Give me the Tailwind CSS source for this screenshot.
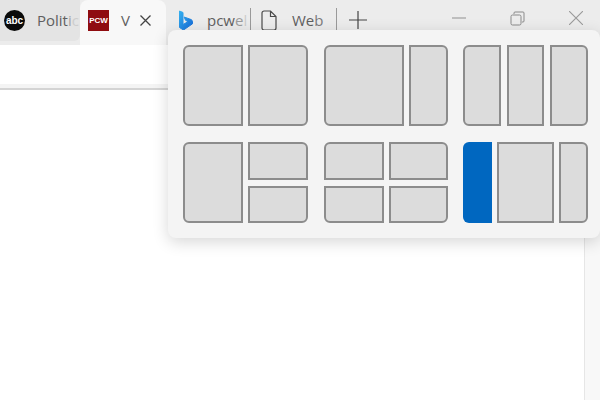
<!DOCTYPE html>
<html lang="en">
<head>
  <meta charset="UTF-8" />
  <title>Snap layouts</title>
  <script src="https://cdn.jsdelivr.net/npm/@tailwindcss/browser@4"></script>
</head>
<body class="w-[600px] h-[400px] overflow-hidden bg-white relative font-['Open_Sans',sans-serif]">

  <!-- title bar with tabs -->
  <div class="h-[45px] bg-[#ececec] flex items-start text-[15px] leading-none text-[#5f5f5f]">
    <div class="w-[80px] h-[41px] bg-[#e4e4e4] rounded-br-[6px] flex items-center pl-[4px] shrink-0">
      <div class="w-[21px] h-[21px] rounded-full bg-[#0b0b0b] flex items-center justify-center text-white text-[10px] font-bold font-['Liberation_Sans',sans-serif] shrink-0">abc</div>
      <span class="ml-[12px] whitespace-nowrap">Polit<span class="text-[#a4a4a4]">i</span><span class="text-[#cdcdcd]">c</span></span>
    </div>
    <div class="w-[86px] h-[45px] bg-[#f8f8f8] rounded-t-[8px] flex items-center pb-[4px] pl-[8px] shrink-0">
      <div class="w-[21px] h-[21px] bg-[#8f0c10] flex items-center justify-center text-white text-[8px] font-bold font-['Liberation_Sans',sans-serif] shrink-0">PCW</div>
      <span class="ml-[12px]">V</span>
      <svg class="ml-[10px]" width="11" height="11" viewBox="0 0 11 11" fill="none" stroke="#444" stroke-width="1.300"><path d="M.5.5l10 10M10.500.5l-10 10" /></svg>
    </div>
    <div class="w-[84px] h-[41px] flex items-center pl-[12px] shrink-0">
      <svg width="15" height="21" viewBox="0 0 15 21">
        <defs>
          <linearGradient id="bing" x1="0" y1="0" x2="1" y2="1">
            <stop offset="0" stop-color="#35b0ee" />
            <stop offset="1" stop-color="#1568d6" />
          </linearGradient>
        </defs>
        <path d="M1.500 1l3.500 1.500v12l5-2.800-2.500-1.400-1.300-3.300 6.800 2.500q1.500.7 1.500 2.300v2L5.500 20 1.500 17.500z" fill="url(#bing)" stroke="url(#bing)" stroke-width="1" stroke-linejoin="round" />
      </svg>
      <span class="ml-[14px] whitespace-nowrap">pcw<span class="text-[#9c9c9c]">e</span><span class="text-[#cdcdcd]">l</span></span>
    </div>
    <div class="w-px h-[22px] mt-[8px] bg-[#9a9a9a] shrink-0"></div>
    <div class="w-[85px] h-[41px] flex items-center pl-[10px] shrink-0">
      <svg width="16" height="21" viewBox="0 0 16 21" fill="none" stroke="#4a4a4a" stroke-width="1.200"><path d="M3 1h6.500L15 6.500V18a2 2 0 0 1-2 2H3a2 2 0 0 1-2-2V3a2 2 0 0 1 2-2zM9.500 1v5.500H15" /></svg>
      <span class="ml-[15px] whitespace-nowrap">We<span class="text-[#7c7c7c]">b</span></span>
    </div>
    <div class="w-px h-[22px] mt-[8px] bg-[#9a9a9a] shrink-0"></div>
    <svg class="ml-[12px] mt-[11px] shrink-0" width="18" height="18" viewBox="0 0 18 18" stroke="#444" stroke-width="1.200"><path d="M9 0v18M0 9h18" /></svg>
    <div class="ml-auto flex items-start">
      <svg class="mt-[17px] mr-[44px]" width="14" height="2" viewBox="0 0 14 2" stroke="#a0a0a0" stroke-width="1.200"><path d="M0 1h14" /></svg>
      <svg class="mt-[11px] mr-[44px]" width="15" height="15" viewBox="0 0 15 15" fill="none" stroke="#8a8a8a" stroke-width="1"><path d="M4 3V2a1 1 0 0 1 1-1h8a1 1 0 0 1 1 1v8a1 1 0 0 1-1 1h-1" /><rect x="1" y="4" width="10" height="10" rx="1.500" /></svg>
      <svg class="mt-[11px] mr-[17px]" width="14" height="14" viewBox="0 0 14 14" stroke="#9a9a9a" stroke-width="1.100"><path d="M0 0l14 14M14 0L0 14" /></svg>
    </div>
  </div>

  <!-- address bar -->
  <div class="h-[39px] bg-white"></div>
  <div class="h-[6px] bg-[#f4f4f4] border-b-2 border-[#d4d4d4]"></div>

  <!-- strip down the right of the page -->
  <div class="absolute right-0 top-[90px] bottom-0 w-[16px] bg-[#f8f8f8] border-l border-[#e6e6e6]"></div>

  <!-- snap layouts flyout -->
  <div class="absolute left-[168px] top-[30px] w-[432px] h-[208px] rounded-[8px] bg-[#f4f4f4] shadow-[0_4px_16px_rgba(0,0,0,0.16)] pt-[15px] pl-[15px] grid grid-cols-[repeat(3,auto)] grid-rows-[81px_81px] gap-y-[16px] justify-start">
    <div class="flex gap-[5px] w-[125px] mr-[16px]">
      <div class="w-[60px] bg-[#dcdcdc] border-2 border-[#8c8c8c] rounded-l-[6px]"></div>
      <div class="w-[60px] bg-[#dcdcdc] border-2 border-[#8c8c8c] rounded-r-[6px]"></div>
    </div>
    <div class="flex gap-[5px] w-[124px] mr-[15px]">
      <div class="w-[80px] bg-[#dcdcdc] border-2 border-[#8c8c8c] rounded-l-[6px]"></div>
      <div class="w-[39px] bg-[#dcdcdc] border-2 border-[#8c8c8c] rounded-r-[6px]"></div>
    </div>
    <div class="flex gap-[6px] w-[125px]">
      <div class="w-[38px] bg-[#dcdcdc] border-2 border-[#8c8c8c] rounded-l-[6px]"></div>
      <div class="w-[37px] bg-[#dcdcdc] border-2 border-[#8c8c8c]"></div>
      <div class="w-[38px] bg-[#dcdcdc] border-2 border-[#8c8c8c] rounded-r-[6px]"></div>
    </div>

    <div class="flex gap-[5px] w-[125px]">
      <div class="w-[60px] bg-[#dcdcdc] border-2 border-[#8c8c8c] rounded-l-[6px]"></div>
      <div class="w-[60px] flex flex-col gap-[6px]">
        <div class="flex-1 bg-[#dcdcdc] border-2 border-[#8c8c8c] rounded-tr-[6px]"></div>
        <div class="flex-1 bg-[#dcdcdc] border-2 border-[#8c8c8c] rounded-br-[6px]"></div>
      </div>
    </div>
    <div class="grid grid-cols-2 grid-rows-2 gap-x-[5px] gap-y-[6px] w-[124px]">
      <div class="bg-[#dcdcdc] border-2 border-[#8c8c8c] rounded-tl-[6px]"></div>
      <div class="bg-[#dcdcdc] border-2 border-[#8c8c8c] rounded-tr-[6px]"></div>
      <div class="bg-[#dcdcdc] border-2 border-[#8c8c8c] rounded-bl-[6px]"></div>
      <div class="bg-[#dcdcdc] border-2 border-[#8c8c8c] rounded-br-[6px]"></div>
    </div>
    <div class="flex gap-[5px] w-[125px]">
      <div class="w-[29px] bg-[#0067c0] rounded-l-[6px]"></div>
      <div class="w-[57px] bg-[#dcdcdc] border-2 border-[#8c8c8c]"></div>
      <div class="w-[29px] bg-[#dcdcdc] border-2 border-[#8c8c8c] rounded-r-[6px]"></div>
    </div>
  </div>
</body>
</html>
